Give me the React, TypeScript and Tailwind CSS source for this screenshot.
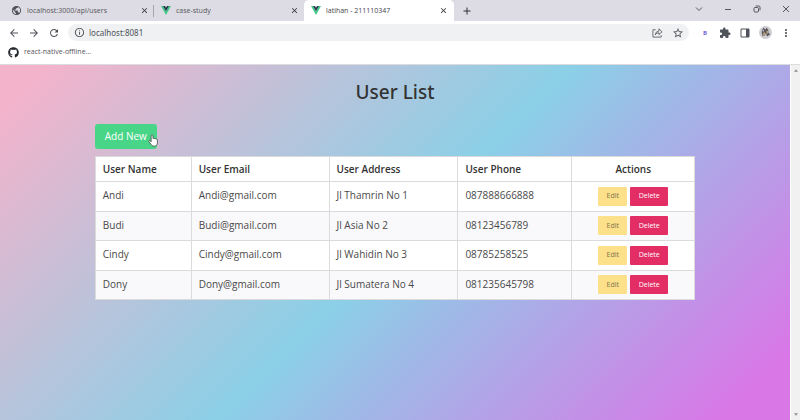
import React from "react";
import { FaGithub } from "react-icons/fa";
import {
  MdArrowBack,
  MdArrowForward,
  MdRefresh,
  MdInfoOutline,
  MdStarBorder,
  MdExtension,
  MdMoreVert,
  MdClose,
  MdAdd,
  MdPublic,
} from "react-icons/md";

const users = [
  { name: "Andi", email: "Andi@gmail.com", address: "Jl Thamrin No 1", phone: "087888666888" },
  { name: "Budi", email: "Budi@gmail.com", address: "Jl Asia No 2", phone: "08123456789" },
  { name: "Cindy", email: "Cindy@gmail.com", address: "Jl Wahidin No 3", phone: "08785258525" },
  { name: "Dony", email: "Dony@gmail.com", address: "Jl Sumatera No 4", phone: "081235645798" },
];

function VueLogo() {
  return (
    <svg viewBox="0 0 20 18" className="h-[9px] w-[10px] shrink-0" aria-hidden="true">
      <path d="M0 0h4l6 10.5L16 0h4L10 18z" fill="#41c98a" />
      <path d="M4 0h4l2 3.6L12 0h4l-6 10.5z" fill="#26384b" />
    </svg>
  );
}

function Tab({ title, icon, active = false }: { title: string; icon: React.ReactNode; active?: boolean }) {
  return (
    <div
      className={
        active
          ? "flex h-[21px] w-[150px] items-center gap-[5px] rounded-t-[5px] bg-white pr-[6px] pl-[7px] text-[#45474b]"
          : "flex h-[21px] w-[149px] items-center gap-[5px] pr-1 pl-[7px] text-[#55565b]"
      }
    >
      {icon}
      <span className="flex-1 truncate text-[7px] leading-3">{title}</span>
      <button aria-label={"Close " + title} className="text-[#303135]">
        <MdClose size={9} />
      </button>
    </div>
  );
}

function TabStrip() {
  return (
    <div className="flex h-[21px] shrink-0 items-center bg-[#dddce4]">
      <div className="w-1" />
      <Tab title="localhost:3000/api/users" icon={<MdPublic size={11} className="shrink-0 text-[#505359]" />} />
      <div className="h-3 w-px bg-[#a5a5ab]" />
      <Tab title="case-study" icon={<VueLogo />} />
      <div className="w-px" />
      <Tab title="latihan - 211110347" icon={<VueLogo />} active />
      <button aria-label="New tab" className="ml-[7px] text-[#303135]">
        <MdAdd size={12} />
      </button>
      <div className="ml-auto flex items-center pb-[3px] text-[#55565b]">
        <button aria-label="Search tabs" className="flex w-[29px] justify-center">
          <svg viewBox="0 0 8 8" className="size-2" fill="none" stroke="currentColor">
            <path d="M1 2.5 4 5.5 7 2.5" />
          </svg>
        </button>
        <button aria-label="Minimize" className="flex w-[29px] justify-center">
          <svg viewBox="0 0 8 8" className="size-2" fill="none" stroke="currentColor">
            <path d="M1 4.5h6" />
          </svg>
        </button>
        <button aria-label="Restore" className="flex w-[29px] justify-center">
          <svg viewBox="0 0 8 8" className="size-2" fill="none" stroke="currentColor">
            <rect x="1" y="2.5" width="4.5" height="4.5" rx="1" />
            <path d="M2.7 1h3.1q1.2 0 1.2 1.2v3.1" />
          </svg>
        </button>
        <button aria-label="Close window" className="flex w-[29px] justify-center">
          <svg viewBox="0 0 8 8" className="size-2" fill="none" stroke="currentColor">
            <path d="m1 1 6 6M7 1 1 7" />
          </svg>
        </button>
      </div>
    </div>
  );
}

function Toolbar() {
  return (
    <div className="flex h-[23px] shrink-0 items-center pr-2 pl-2 text-[#505359]">
      <button aria-label="Back"><MdArrowBack size={12} /></button>
      <button aria-label="Forward" className="ml-2"><MdArrowForward size={12} /></button>
      <button aria-label="Reload" className="ml-2"><MdRefresh size={12} /></button>
      <div className="ml-2 flex h-[17px] flex-1 items-center rounded-full bg-[#eff1f3] pr-[5px] pl-[6px]">
        <MdInfoOutline size={11} className="shrink-0" />
        <input
          aria-label="Address"
          defaultValue="localhost:8081"
          className="ml-1 min-w-0 flex-1 bg-transparent font-['Noto_Sans',sans-serif] text-[8px] leading-3 outline-none"
        />
        <button aria-label="Share">
          <svg viewBox="0 0 12 12" className="size-[11px]" fill="none" stroke="currentColor" strokeWidth="0.9">
            <path d="M4 3H1v8h9V9" />
            <path d="M3.5 8.5Q4 4.5 7.5 4.5V2L11 5.3 7.5 8.2V6.3Q5 6.3 3.5 8.5z" strokeLinejoin="round" />
          </svg>
        </button>
        <button aria-label="Bookmark" className="ml-[9px]"><MdStarBorder size={12} /></button>
      </div>
      <div className="ml-[10px] flex items-center gap-2">
        <button aria-label="Extension B" className="w-3 text-[6px] leading-3 font-bold text-[#7564dc]">B</button>
        <button aria-label="Extensions"><MdExtension size={12} /></button>
        <button aria-label="Side panel">
          <svg viewBox="0 0 12 12" className="size-3">
            <path d="M2 2h8v8H2z" fill="none" stroke="currentColor" />
            <path d="M7 2h3v8H7z" fill="currentColor" />
          </svg>
        </button>
        <button aria-label="Profile">
          <svg viewBox="0 0 14 14" className="size-[13px]">
            <circle cx="7" cy="7" r="7" fill="#cfccd2" />
            <path d="M3 5 5 2l2 2 1-2 2 2v3l2 2-3 2-3-1-2 1-1-3z" fill="#55535a" />
            <path d="m4 8 2-2 1 4-2 1zM8 5h2v3H8z" fill="#b59c7b" />
            <path d="M7 8h1v4H7zM4 4h1v2H4z" fill="#f2f0f2" />
          </svg>
        </button>
        <button aria-label="Menu"><MdMoreVert size={12} /></button>
      </div>
    </div>
  );
}

function PointerHand() {
  return (
    <svg viewBox="0 0 16 20" className="absolute top-[12px] left-[53px] h-[13px] w-[10px]" aria-hidden="true">
      <path
        d="M5 2.5C5 .5 8 .5 8 2.5V7c.5-1 2.5-.8 2.7.3.6-.8 2.1-.5 2.3.6.8-.5 2 0 2 1.1V14c0 3-2 5-5 5-3.5 0-4.5-1.5-5.5-3.5L1.5 12c-1-1.7 1-2.8 2.2-1.5L5 12z"
        fill="#fff"
        stroke="#3c4043"
        strokeWidth="1.2"
      />
    </svg>
  );
}

const headCell = "border border-[#dbdbdb] px-[7px] pt-px text-left font-semibold";
const bodyCell = "border border-[#dbdbdb] px-[7px] pt-[5px] align-top";

function UserPage() {
  return (
    <main className="min-w-0 flex-1 bg-linear-[135deg,#f3b3cb_4%,#8bd0e7_50%,#d977e7_94%] text-[#4a4a4a]">
      <div className="mx-auto w-[76%] pt-[13px]">
        <h1 className="text-center font-['Noto_Sans',sans-serif] text-[19px] leading-7 font-medium text-[#333]">User List</h1>
        <div className="relative mt-4 w-fit">
          <button className="h-[25px] rounded-[3px] bg-[#48d588] px-[10px] text-[10px] leading-4 text-white">
            Add New
          </button>
          <PointerHand />
        </div>
        <table className="mt-[7px] w-full table-fixed border-collapse bg-white text-[10px] leading-4">
          <colgroup>
            <col className="w-[16%]" />
            <col className="w-[23%]" />
            <col className="w-[21.5%]" />
            <col className="w-[19%]" />
            <col />
          </colgroup>
          <thead>
            <tr className="h-[25px] text-[#333]">
              <th className={headCell}>User Name</th>
              <th className={headCell}>User Email</th>
              <th className={headCell}>User Address</th>
              <th className={headCell}>User Phone</th>
              <th className="border border-[#dbdbdb] pt-px text-center font-semibold">Actions</th>
            </tr>
          </thead>
          <tbody>
            {users.map((user) => (
              <tr key={user.name} className="odd:h-[30px] even:h-[29px] even:bg-[#f9f8fa]">
                <td className={bodyCell}>{user.name}</td>
                <td className={bodyCell}>{user.email}</td>
                <td className={bodyCell}>{user.address}</td>
                <td className={bodyCell}>{user.phone}</td>
                <td className="border border-[#dbdbdb]">
                  <div className="flex justify-center gap-[3px] text-[7px] leading-3">
                    <button className="h-[19px] w-[29px] rounded-[1px] bg-[#fde08a] text-[#80724d]">Edit</button>
                    <button className="h-[19px] w-[38px] rounded-[1px] bg-[#e32d65] text-white">Delete</button>
                  </div>
                </td>
              </tr>
            ))}
          </tbody>
        </table>
      </div>
    </main>
  );
}

export default function App() {
  return (
    <div className="flex min-h-screen flex-col bg-white font-['Open_Sans','Noto_Sans',sans-serif]">
      <TabStrip />
      <Toolbar />
      <nav aria-label="Bookmarks" className="flex h-[21px] shrink-0 items-center border-b border-[#dcdce0] pb-1 pl-2">
        <a href="#react-native-offline" className="flex items-center gap-[5px] text-[7px] leading-3 text-[#55565b]">
          <FaGithub size={11} className="text-[#25292e]" />
          react-native-offline...
        </a>
      </nav>
      <div className="flex flex-1">
        <UserPage />
        <div className="flex w-[10px] shrink-0 flex-col items-center justify-between border-l border-white bg-[#f1f1f2] py-1 text-[#8b8b8e]">
          <svg viewBox="0 0 6 4" className="h-[3px] w-1"><path d="M3 0l3 4H0z" fill="currentColor" /></svg>
          <svg viewBox="0 0 6 4" className="h-[3px] w-1"><path d="M0 0h6L3 4z" fill="currentColor" /></svg>
        </div>
      </div>
    </div>
  );
}
